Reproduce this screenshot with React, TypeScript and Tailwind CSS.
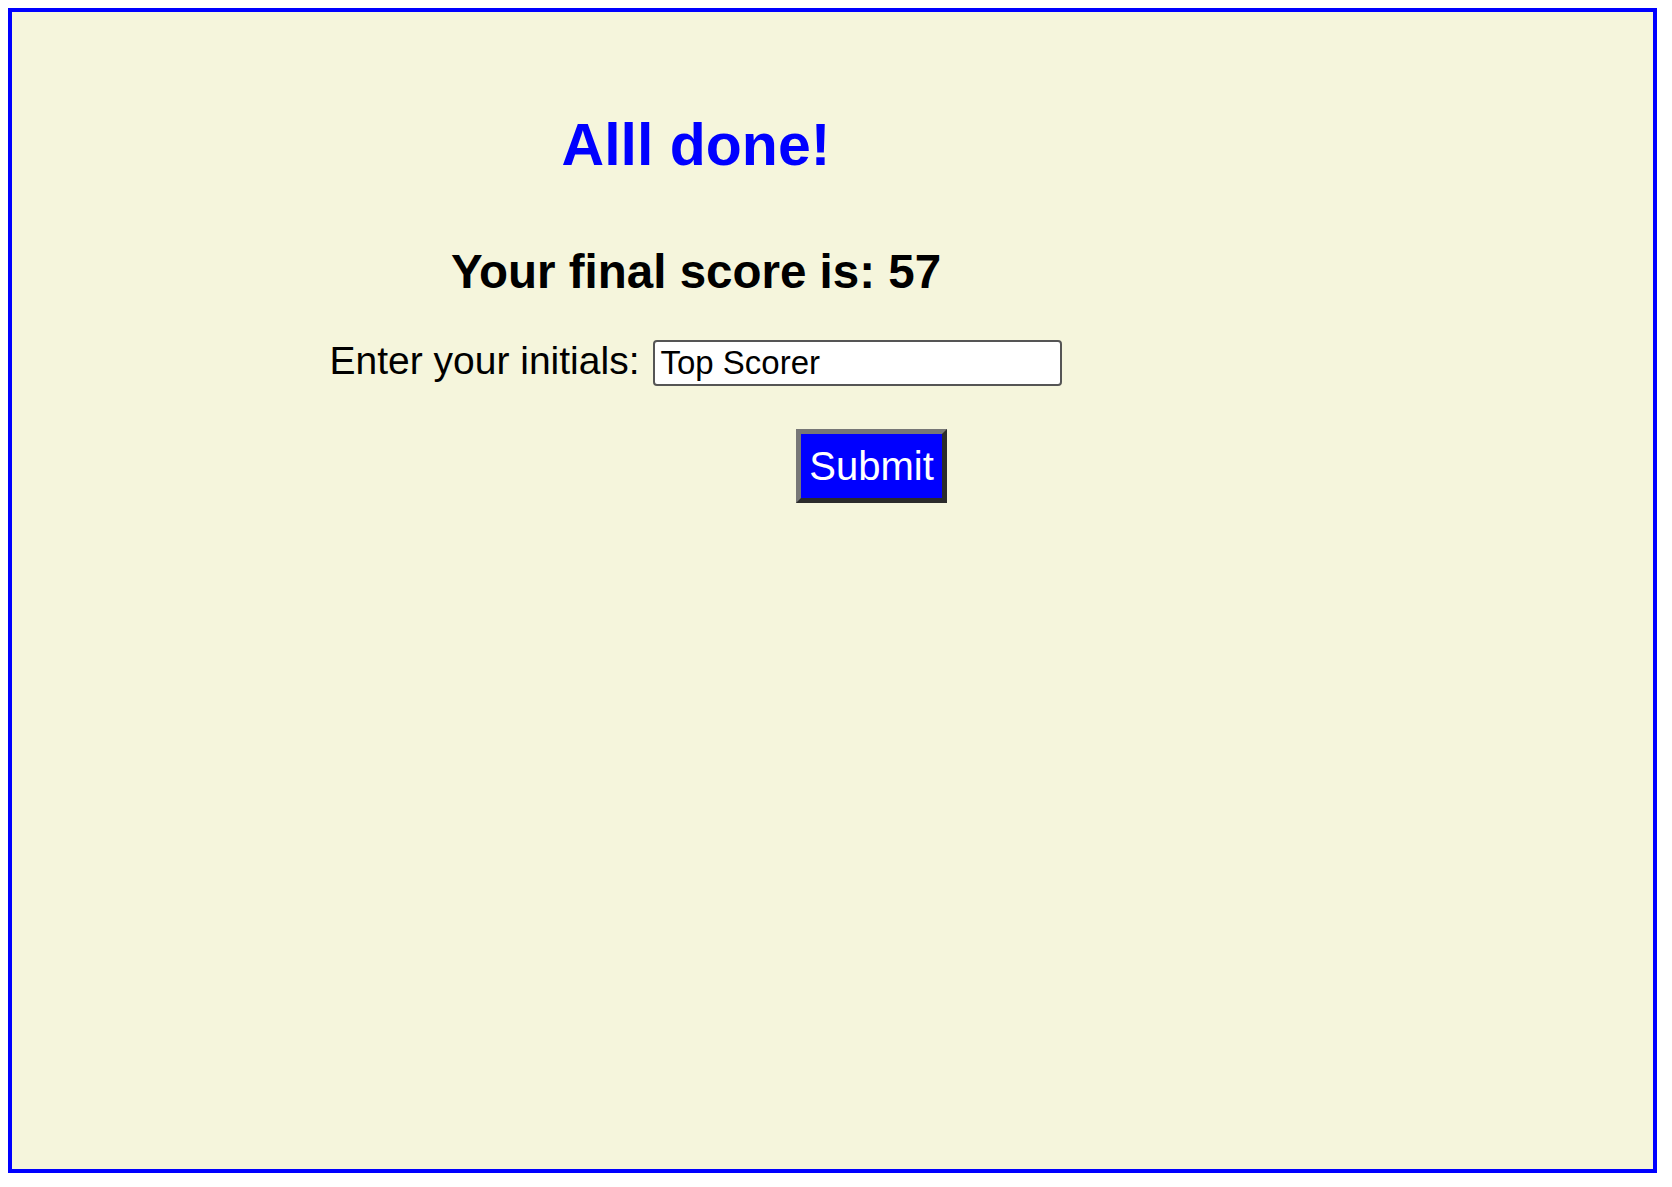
export default function App() {
  return (
    <div className="min-h-screen bg-white p-[8px] font-['Liberation_Sans',Arial,sans-serif]">
      <div className="w-[1649px] h-[1165px] border-4 border-[#0000ff] bg-[#f5f5dc]">
        <div className="w-[1368px] flex flex-col items-center">
          <h1 className="mt-[104px] text-[59px] leading-none font-bold text-[#0000ff]">Alll done!</h1>

          <h2 className="mt-[73px] text-[47.5px] leading-none font-bold text-black">Your final score is: 57</h2>

          <div className="mt-[44px] flex items-baseline gap-[14px]">
            <label htmlFor="initials" className="text-[39px] leading-none text-black">
              Enter your initials:
            </label>
            <input
              id="initials"
              type="text"
              defaultValue="Top Scorer"
              className="w-[409px] h-[46px] px-[5px] border-2 border-[#555] rounded-[4px] bg-white text-[33px] text-black outline-none"
            />
          </div>

          <button className="mt-[43px] ml-[351px] w-[151px] h-[74px] border-[5px] border-t-[#777] border-l-[#777] border-r-[#2b2b2b] border-b-[#2b2b2b] bg-[#0000ff] text-white text-[40px] leading-none">
            Submit
          </button>
        </div>
      </div>
    </div>
  );
}
